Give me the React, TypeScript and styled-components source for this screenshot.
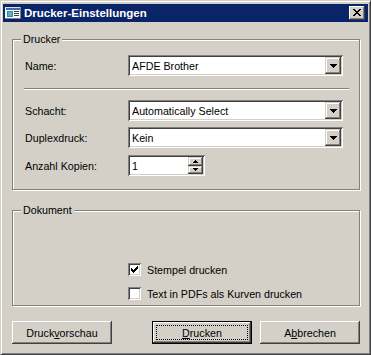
import React from 'react';
import styled, { createGlobalStyle, css } from 'styled-components';

const Global = createGlobalStyle`
  html, body { margin: 0; padding: 0; background: #D4D0C8; }
  body {
    font-family: "Liberation Sans", Arial, sans-serif;
    font-size: 10.7px;
    color: #000;
  }
  * { box-sizing: border-box; }
`;

const Window = styled.div`
  width: 371px;
  height: 355px;
  background: #D4D0C8;
  border-top: 1px solid #D4D0C8;
  border-left: 1px solid #D4D0C8;
  border-right: 1px solid #404040;
  border-bottom: 1px solid #404040;
  box-shadow: inset 1px 1px #fff, inset -1px -1px #808080;
  padding: 2px;
  display: flex;
  flex-direction: column;
`;

const TitleBar = styled.div`
  height: 18px;
  margin-top: 1px;
  background: #0A246A;
  display: flex;
  align-items: center;
  padding: 0 3px 0 2px;
  gap: 3px;
`;

const Title = styled.div`
  flex: 1;
  color: #fff;
  font-weight: bold;
  font-size: 11.5px;
`;

const raised = css`
  background: #D4D0C8;
  box-shadow: inset -1px -1px #404040, inset 1px 1px #fff, inset -2px -2px #808080, inset 2px 2px #D4D0C8;
`;

const CloseBtn = styled.div`
  ${raised};
  width: 16px;
  height: 14px;
  display: flex;
  align-items: center;
  justify-content: center;
  padding-bottom: 1px;
`;

const Body = styled.div`
  flex: 1;
  display: flex;
  flex-direction: column;
  padding: 17px 8px 0 9px;
`;

const Group = styled.div<{ $mt?: number; $pad: string }>`
  position: relative;
  border: 1px solid #808080;
  box-shadow: 1px 1px 0 #fff, inset 1px 1px 0 #fff;
  margin-top: ${(p) => p.$mt ?? 0}px;
  padding: ${(p) => p.$pad};
  display: flex;
  flex-direction: column;
`;

const Legend = styled.div`
  position: absolute;
  top: -7px;
  left: 8px;
  padding: 0 2px;
  background: #D4D0C8;
  line-height: 13px;
`;

const Row = styled.div<{ $mt?: number }>`
  display: grid;
  grid-template-columns: 103px 1fr;
  align-items: center;
  height: 21px;
  margin-top: ${(p) => p.$mt ?? 0}px;
`;

const Label = styled.div`
  white-space: nowrap;
`;

const sunken = css`
  background: #fff;
  box-shadow: inset 1px 1px #808080, inset -1px -1px #fff, inset 2px 2px #404040, inset -2px -2px #D4D0C8;
`;

const Field = styled.div<{ $w?: number }>`
  ${sunken};
  height: 21px;
  width: ${(p) => (p.$w ? `${p.$w}px` : '215px')};
  display: flex;
  align-items: center;
  padding: 2px;
`;

const FieldText = styled.div`
  flex: 1;
  padding-left: 2px;
  white-space: nowrap;
  overflow: hidden;
`;

const DropBtn = styled.div`
  ${raised};
  box-shadow: inset -1px -1px #404040, inset 1px 1px #D4D0C8, inset -2px -2px #808080, inset 2px 2px #fff;
  width: 16px;
  height: 17px;
  display: flex;
  align-items: center;
  justify-content: center;
`;

const SpinCol = styled.div`
  display: flex;
  flex-direction: column;
  width: 15px;
  height: 17px;
`;

const SpinBtn = styled.div`
  ${raised};
  box-shadow: inset -1px -1px #404040, inset 1px 1px #D4D0C8, inset -2px -2px #808080, inset 2px 2px #fff;
  flex: 1;
  display: flex;
  align-items: center;
  justify-content: center;
`;

const Separator = styled.div`
  border-top: 1px solid #808080;
  border-bottom: 1px solid #fff;
  margin: 12px -5px 10px -1px;
`;

const CheckRow = styled.div<{ $mt?: number }>`
  display: flex;
  align-items: center;
  gap: 6px;
  height: 17px;
  margin-top: ${(p) => p.$mt ?? 0}px;
`;

const CheckBox = styled.div`
  ${sunken};
  width: 13px;
  height: 13px;
  padding: 3px;
  display: flex;
`;

const ButtonRow = styled.div`
  display: flex;
  margin-top: 15px;
  gap: 8px;
`;

const Spacer = styled.div`
  flex: 1;
`;

const Button = styled.div<{ $default?: boolean }>`
  ${raised};
  width: 100px;
  height: 23px;
  display: flex;
  align-items: center;
  justify-content: center;
  position: relative;
  ${(p) =>
    p.$default &&
    css`
      border: 1px solid #000;
      &::after {
        content: '';
        position: absolute;
        inset: 3px;
        border: 1px dotted #000;
      }
    `}
`;

const U = styled.span`
  text-decoration: underline;
  text-underline-offset: 1px;
`;

const Pixels: React.FC<{ rows: [number, number, number][]; w: number; h: number; color?: string }> = ({ rows, w, h, color = '#000' }) => (
  <svg width={w} height={h} viewBox={`0 0 ${w} ${h}`} shapeRendering="crispEdges" style={{ display: 'block' }}>
    {rows.map(([y, x0, x1], i) => (
      <rect key={i} x={x0} y={y} width={x1 - x0 + 1} height={1} fill={color} />
    ))}
  </svg>
);

const DownArrow = () => (
  <Pixels w={7} h={4} rows={[[0, 0, 6], [1, 1, 5], [2, 2, 4], [3, 3, 3]]} />
);

const SmallUp = () => <Pixels w={5} h={3} rows={[[0, 2, 2], [1, 1, 3], [2, 0, 4]]} />;
const SmallDown = () => <Pixels w={5} h={3} rows={[[0, 0, 4], [1, 1, 3], [2, 2, 2]]} />;

const Check = () => (
  <Pixels
    w={7}
    h={7}
    rows={[
      [0, 6, 6],
      [1, 5, 6],
      [2, 0, 0],
      [2, 4, 6],
      [3, 0, 1],
      [3, 3, 5],
      [4, 0, 4],
      [5, 1, 3],
      [6, 2, 2],
    ]}
  />
);

const CloseGlyph = () => (
  <Pixels
    w={8}
    h={7}
    rows={[
      [0, 0, 1],
      [0, 6, 7],
      [1, 1, 2],
      [1, 5, 6],
      [2, 2, 5],
      [3, 3, 4],
      [4, 2, 5],
      [5, 1, 2],
      [5, 5, 6],
      [6, 0, 1],
      [6, 6, 7],
    ]}
  />
);

const AppIcon = () => (
  <svg width={16} height={16} viewBox="0 0 16 16" shapeRendering="crispEdges" style={{ display: 'block' }}>
    <rect x={0} y={2} width={16} height={12} fill="#fff" />
    <rect x={0} y={2} width={16} height={1} fill="#dcdcdc" />
    <rect x={1} y={3} width={14} height={2} fill="#3a6ea5" />
    <rect x={2} y={6} width={6} height={6} fill="#3a8a9a" />
    <rect x={3} y={7} width={4} height={4} fill="#5fb0b8" />
    <rect x={9} y={6} width={5} height={1} fill="#404040" />
    <rect x={9} y={8} width={5} height={1} fill="#404040" />
    <rect x={9} y={10} width={5} height={1} fill="#404040" />
    <rect x={0} y={13} width={16} height={1} fill="#808080" />
    <rect x={15} y={2} width={1} height={12} fill="#808080" />
  </svg>
);

const Combo: React.FC<{ value: string }> = ({ value }) => (
  <Field>
    <FieldText>{value}</FieldText>
    <DropBtn>
      <DownArrow />
    </DropBtn>
  </Field>
);

export default function App() {
  return (
    <>
      <Global />
      <Window>
        <TitleBar>
          <AppIcon />
          <Title>Drucker-Einstellungen</Title>
          <CloseBtn>
            <CloseGlyph />
          </CloseBtn>
        </TitleBar>
        <Body>
          <Group $pad="15px 15px 13px 12px">
            <Legend>Drucker</Legend>
            <Row>
              <Label>Name:</Label>
              <Combo value="AFDE Brother" />
            </Row>
            <Separator />
            <Row>
              <Label>Schacht:</Label>
              <Combo value="Automatically Select" />
            </Row>
            <Row $mt={6}>
              <Label>Duplexdruck:</Label>
              <Combo value="Kein" />
            </Row>
            <Row $mt={7}>
              <Label>Anzahl Kopien:</Label>
              <Field $w={77}>
                <FieldText>1</FieldText>
                <SpinCol>
                  <SpinBtn>
                    <SmallUp />
                  </SpinBtn>
                  <SpinBtn>
                    <SmallDown />
                  </SpinBtn>
                </SpinCol>
              </Field>
            </Row>
          </Group>
          <Group $mt={20} $pad="50px 10px 3px 115px">
            <Legend>Dokument</Legend>
            <CheckRow>
              <CheckBox>
                <Check />
              </CheckBox>
              <span>Stempel drucken</span>
            </CheckRow>
            <CheckRow $mt={7}>
              <CheckBox />
              <span>Text in PDFs als Kurven drucken</span>
            </CheckRow>
          </Group>
          <ButtonRow>
            <Button>
              <span>
                Druck<U>v</U>orschau
              </span>
            </Button>
            <Spacer />
            <Button $default>
              <span>
                <U>D</U>rucken
              </span>
            </Button>
            <Button>
              <span>
                A<U>b</U>brechen
              </span>
            </Button>
          </ButtonRow>
        </Body>
      </Window>
    </>
  );
}
